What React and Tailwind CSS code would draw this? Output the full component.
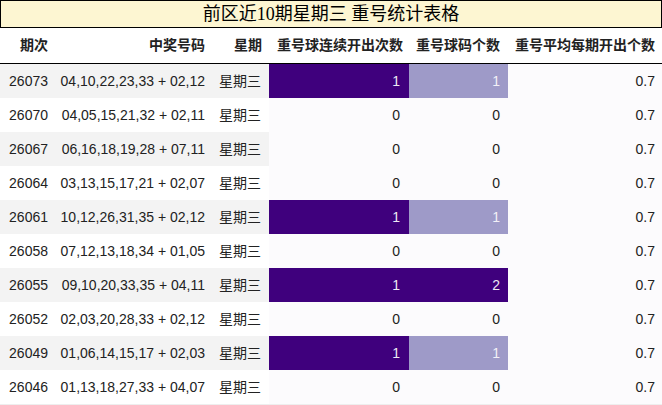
const rows = [
  { id: "26073", nums: "04,10,22,23,33 + 02,12", a: 1, b: 1 },
  { id: "26070", nums: "04,05,15,21,32 + 02,11", a: 0, b: 0 },
  { id: "26067", nums: "06,16,18,19,28 + 07,11", a: 0, b: 0 },
  { id: "26064", nums: "03,13,15,17,21 + 02,07", a: 0, b: 0 },
  { id: "26061", nums: "10,12,26,31,35 + 02,12", a: 1, b: 1 },
  { id: "26058", nums: "07,12,13,18,34 + 01,05", a: 0, b: 0 },
  { id: "26055", nums: "09,10,20,33,35 + 04,11", a: 1, b: 2 },
  { id: "26052", nums: "02,03,20,28,33 + 02,12", a: 0, b: 0 },
  { id: "26049", nums: "01,06,14,15,17 + 02,03", a: 1, b: 1 },
  { id: "26046", nums: "01,13,18,27,33 + 04,07", a: 0, b: 0 },
];

const cols = "grid grid-cols-[55px_158px_56px_140px_99px_154px]";

function shade(v) {
  if (v >= 2) return "bg-[#3f007d] text-[#ece9f4]";
  if (v === 1) return "bg-[#9e9ac8] text-[#f2f0f7]";
  return "bg-[#fcfbfd] text-[#222]";
}

function shadeA(v) {
  if (v >= 1) return "bg-[#3f007d] text-[#ece9f4]";
  return "bg-[#fcfbfd] text-[#222]";
}

export default function App() {
  return (
    <div
      className="w-[662px] h-[405px] bg-white text-[14px] text-[#222] overflow-hidden"
      style={{ fontFamily: '"Liberation Sans", "Noto Sans CJK SC", sans-serif' }}
    >
      <div
        className="h-[28px] border border-black bg-[#fdf6d2] flex items-center justify-center text-[18px] text-black leading-none"
        style={{ fontFamily: '"Liberation Serif", "Noto Sans CJK SC", serif' }}
      >
        前区近10期星期三 重号统计表格
      </div>
      <div className="border-b border-[#eeeeee]">
        <div className={`${cols} h-[36px] border-b border-black font-bold items-center text-right`}>
          <div className="pr-[7px]">期次</div>
          <div className="pr-[8px]">中奖号码</div>
          <div className="pr-[7px]">星期</div>
          <div className="pr-[6px]">重号球连续开出次数</div>
          <div className="pr-[8px]">重号球码个数</div>
          <div className="pr-[7px]">重号平均每期开出个数</div>
        </div>
        {rows.map((r, i) => {
          const bg = i % 2 === 0 ? "bg-[#f3f3f3]" : "bg-white";
          return (
            <div key={r.id} className={`${cols} h-[34px] text-right`}>
              <div className={`${bg} flex items-center justify-end pr-[7px]`}>{r.id}</div>
              <div className={`${bg} flex items-center justify-end pr-[8px]`}>{r.nums}</div>
              <div className={`${bg} flex items-center justify-end pr-[8px]`}>星期三</div>
              <div className={`${shadeA(r.a)} flex items-center justify-end pr-[9px]`}>{r.a}</div>
              <div className={`${shade(r.b)} flex items-center justify-end pr-[8px]`}>{r.b}</div>
              <div className="bg-[#fcfbfd] flex items-center justify-end pr-[7px]">0.7</div>
            </div>
          );
        })}
      </div>
    </div>
  );
}
